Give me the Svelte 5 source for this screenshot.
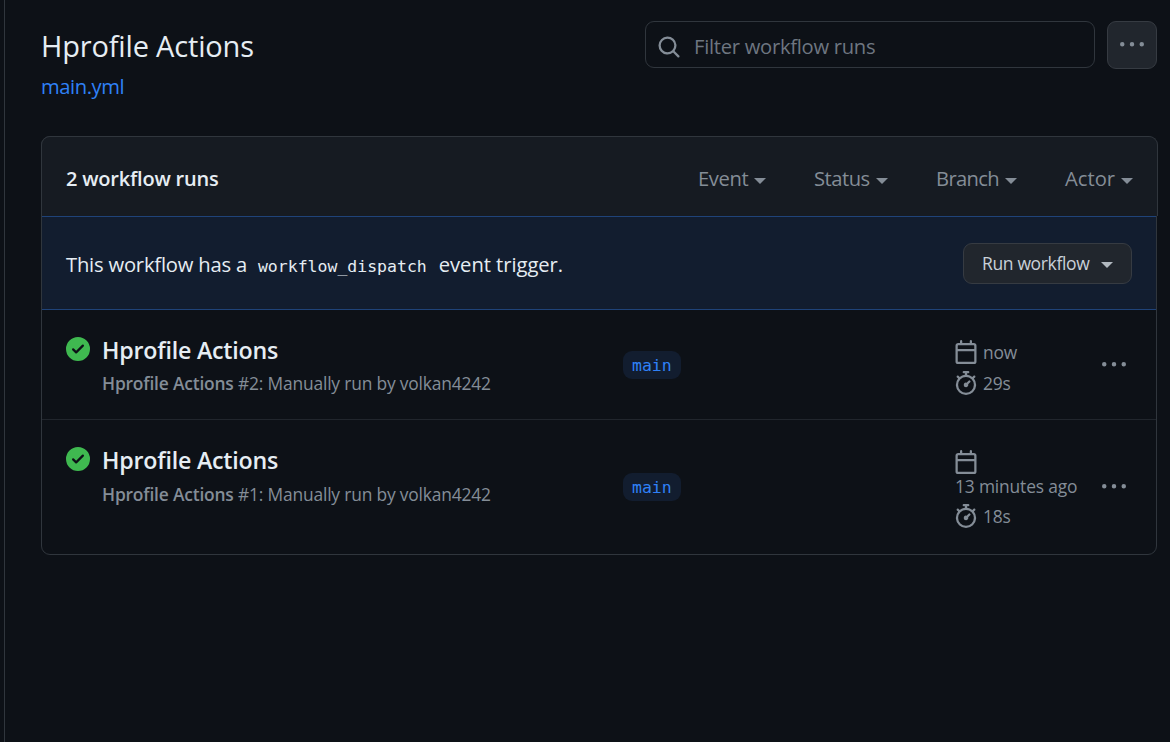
<script>
  const filters = [
    { name: 'Event', width: 68, spacing: -0.4 },
    { name: 'Status', width: 74, spacing: -0.5 },
    { name: 'Branch', width: 81, spacing: -0.65 },
    { name: 'Actor', width: 68, spacing: 0 }
  ];
  const runs = [
    { id: 2, when: 'now', took: '29s', wraps: false },
    { id: 1, when: '13 minutes ago', took: '18s', wraps: true }
  ];
  const icons = {
    search: 'M10.68 11.74a6 6 0 0 1-7.922-8.982 6 6 0 0 1 8.982 7.922l3.04 3.04a.749.749 0 0 1-.326 1.275.749.749 0 0 1-.734-.215ZM11.5 7a4.499 4.499 0 1 0-8.997 0A4.499 4.499 0 0 0 11.5 7Z',
    kebab: 'M8 9a1.5 1.5 0 1 0 0-3 1.5 1.5 0 0 0 0 3ZM1.5 9a1.5 1.5 0 1 0 0-3 1.5 1.5 0 0 0 0 3Zm13 0a1.5 1.5 0 1 0 0-3 1.5 1.5 0 0 0 0 3Z',
    check: 'M8 16A8 8 0 1 1 8 0a8 8 0 0 1 0 16Zm3.78-9.72a.751.751 0 0 0-.018-1.042.751.751 0 0 0-1.042-.018L6.75 9.19 5.28 7.72a.751.751 0 0 0-1.042.018.751.751 0 0 0-.018 1.042l2 2a.75.75 0 0 0 1.06 0Z',
    calendar: 'M4.75 0a.75.75 0 0 1 .75.75V2h5V.75a.75.75 0 0 1 1.5 0V2h1.25c.966 0 1.75.784 1.75 1.75v10.5A1.75 1.75 0 0 1 13.25 16H2.75A1.75 1.75 0 0 1 1 14.25V3.75C1 2.784 1.784 2 2.75 2H4V.75A.75.75 0 0 1 4.75 0ZM2.5 7.5v6.75c0 .138.112.25.25.25h10.5a.25.25 0 0 0 .25-.25V7.5Zm10.75-4H2.75a.25.25 0 0 0-.25.25V6h11V3.75a.25.25 0 0 0-.25-.25Z',
    stopwatch: 'M5.75.75A.75.75 0 0 1 6.5 0h3a.75.75 0 0 1 0 1.5h-.75v1l-.001.041a6.724 6.724 0 0 1 3.464 1.435l.007-.006.75-.75a.749.749 0 0 1 1.275.326.749.749 0 0 1-.215.734l-.75.75-.006.007a6.75 6.75 0 1 1-10.548 0L2.72 5.03l-.75-.75a.751.751 0 0 1 .018-1.042.751.751 0 0 1 1.042-.018l.75.75.007.006A6.72 6.72 0 0 1 7.25 2.541V1.5H6.5a.75.75 0 0 1-.75-.75ZM8 14.5a5.25 5.25 0 1 0-.001-10.501A5.25 5.25 0 0 0 8 14.5Zm.389-6.7 1.33-1.33a.75.75 0 1 1 1.061 1.06L9.45 8.861A1.503 1.503 0 0 1 8 10.75a1.499 1.499 0 1 1 .389-2.95Z'
  };
</script>

{#snippet icon(name)}
  <svg class="icon" viewBox="0 0 16 16" width="24" height="24" aria-hidden="true"><path d={icons[name]} /></svg>
{/snippet}

<main>
  <header>
    <div class="heading">
      <h1>Hprofile Actions</h1>
      <a href="#main">main.yml</a>
    </div>
    <div class="tools">
      <div class="search">{@render icon('search')}<span>Filter workflow runs</span></div>
      <button class="more" aria-label="More">{@render icon('kebab')}</button>
    </div>
  </header>

  <section>
    <div class="bar">
      <strong>2 workflow runs</strong>
      <div class="filters">
        {#each filters as f}
          <div class="filter" style="width: {f.width}px; letter-spacing: {f.spacing}px"><span>{f.name}</span><i class="caret"></i></div>
        {/each}
      </div>
    </div>
    <div class="dispatch">
      <p><span class="lead">This workflow has a</span><code>workflow_dispatch</code><span class="tail">event trigger.</span></p>
      <button class="run-btn"><span>Run workflow</span><i class="caret"></i></button>
    </div>
    {#each runs as r}
      <div class="run" class:tall={r.wraps}>
        <div class="status">{@render icon('check')}</div>
        <div class="info">
          <h2>Hprofile Actions</h2>
          <p><b>Hprofile Actions</b> <span>#{r.id}: Manually run by volkan4242</span></p>
        </div>
        <div class="branch"><span>main</span></div>
        <div class="meta">
          <div class="when">{@render icon('calendar')}<span>{r.when}</span></div>
          <div class="took">{@render icon('stopwatch')}<span>{r.took}</span></div>
        </div>
        <div class="menu">{@render icon('kebab')}</div>
      </div>
    {/each}
  </section>
</main>

<style>
  :global(body) { margin: 0; background: #0d1117; }
  * { box-sizing: border-box; }
  main {
    height: 742px;
    margin-left: 4px;
    border-left: 1px solid #30363d;
    padding: 21px 13px 0 36px;
    background: #0d1117;
    color: #e6edf3;
    font-family: "Open Sans", "Noto Sans", sans-serif;
    font-size: 20px;
    white-space: nowrap;
    overflow: hidden;
  }
  h1, h2, p { margin: 0; }
  .icon { display: block; flex: none; fill: currentColor; }
  button { font: inherit; color: inherit; padding: 0; }
  header { display: flex; justify-content: space-between; height: 115px; }
  .heading { display: flex; flex-direction: column; }
  h1 { font-size: 29px; font-weight: 400; line-height: 45px; margin-top: 2px; letter-spacing: -0.17px; }
  a { color: #2f81f7; text-decoration: none; font-size: 20.2px; line-height: 32px; letter-spacing: -0.42px; margin-top: 2px; }
  .tools { display: flex; gap: 12px; align-items: flex-start; }
  .search {
    display: flex; align-items: center; gap: 13px;
    width: 450px; height: 47px; padding-left: 11px;
    border: 1px solid #30363d; border-radius: 9px; color: #848d97;
  }
  .search .icon { margin-top: 4px; }
  .search span { color: #6e7681; font-size: 20.2px; letter-spacing: -0.28px; margin-top: 2px; }
  .more {
    width: 50px; height: 48px; display: flex; justify-content: center; align-items: center;
    background: #21262d; border: 1px solid #363b42; border-radius: 9px; color: #848d97;
  }
  section {
    display: flex; flex-direction: column;
    height: 419px; width: 1116px;
    border: 1px solid #30363d; border-radius: 9px;
  }
  .bar {
    flex: none; display: flex; justify-content: space-between; align-items: center;
    height: 80px; width: 1117px; margin: -1px 0 0 -1px; padding: 4px 24px 0;
    background: #161b22; border: 1px solid #30363d; border-bottom: 0; border-radius: 9px 9px 0 0;
  }
  strong { font-size: 20px; font-weight: 600; letter-spacing: -0.2px; }
  .filters { display: flex; gap: 48px; color: #848d97; }
  .filter { display: flex; justify-content: space-between; align-items: center; }
  .filter span { font-size: 20.2px; margin-top: -2px; }
  .caret { flex: none; width: 12px; border: 6px solid transparent; border-top-color: currentColor; border-bottom: 0; margin-top: 4px; }
  .dispatch {
    flex: none; display: flex; justify-content: space-between; align-items: center;
    height: 94px; width: 1114px; padding: 0 24px;
    background: #121d2f; border: solid #1f4379; border-width: 1px 0;
  }
  .dispatch p { display: flex; align-items: baseline; font-size: 20.2px; letter-spacing: -0.2px; margin-top: 2px; }
  .tail { letter-spacing: -0.05px; }
  code { font-family: "DejaVu Sans Mono", monospace; font-size: 16.5px; letter-spacing: 0; margin: 0 12px 0 11px; }
  .run-btn {
    display: flex; justify-content: space-between; align-items: center;
    width: 169px; height: 41px; padding: 0 18px; color: #c9d1d9;
    background: #21262d; border: 1px solid #363b42; border-radius: 9px;
  }
  .run-btn span { font-size: 17.5px; letter-spacing: -0.35px; }
  .run-btn .caret { color: #b1b8bf; }
  .run { flex: none; display: flex; height: 109px; padding: 0 18px 0 24px; color: #848d97; }
  .run.tall { height: 135px; border-top: 1px solid #21262d; }
  .status { width: 36px; padding-top: 27px; color: #3fb950; }
  .info { width: 521px; padding-top: 22px; }
  h2 { font-size: 23.2px; font-weight: 600; line-height: 36px; letter-spacing: -0.2px; color: #e6edf3; }
  .info p { font-size: 17.4px; line-height: 28px; letter-spacing: -0.18px; margin-top: 1px; }
  .tall .info p { margin-top: 2px; }
  b { font-weight: 600; }
  .branch { width: 331px; display: flex; align-items: center; }
  .tall .branch, .tall .menu { height: 133px; }
  .branch span {
    font-family: "DejaVu Sans Mono", monospace; font-size: 16.5px; line-height: 27px; height: 28px;
    padding: 1px 9px 0; border-radius: 9px; background: #121d2f; color: #2f81f7;
  }
  .meta { width: 148px; padding-top: 30px; font-size: 17.4px; letter-spacing: -0.16px; }
  .when, .took { display: flex; gap: 5px; line-height: 24px; }
  .took { margin-top: 7px; }
  .tall .when { display: block; }
  .tall .when span { margin-left: 1px; }
  .tall .took { margin-top: 6px; }
  .menu { display: flex; align-items: center; }
</style>
